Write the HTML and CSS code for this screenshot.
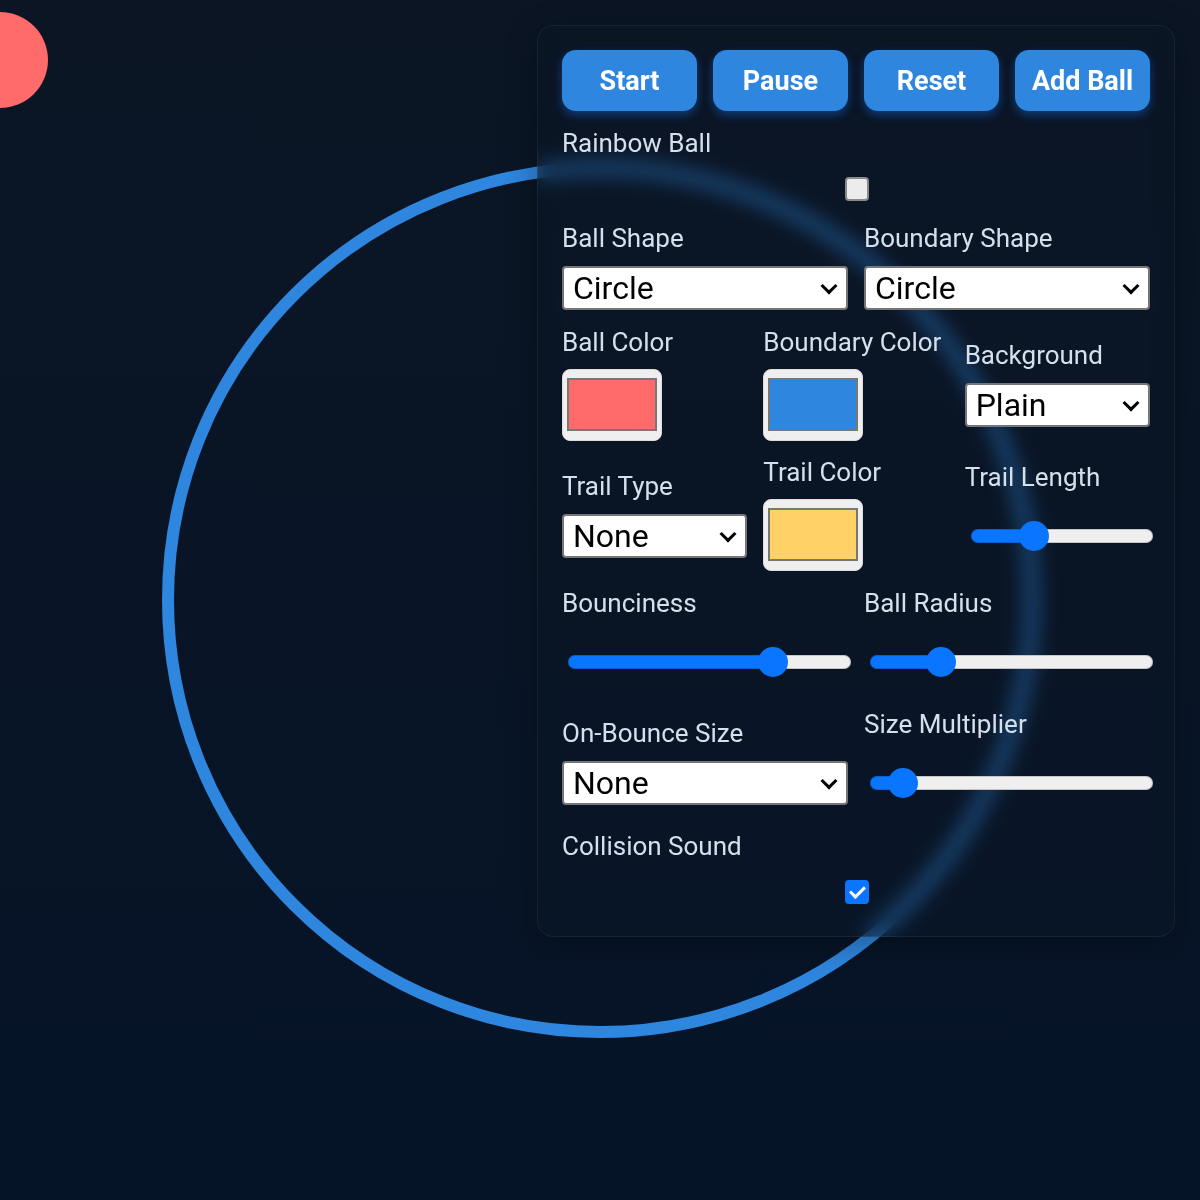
FILE: index.html
```html
<!DOCTYPE html>
<html lang="en">
<head>
<meta charset="utf-8">
<title>Bouncing Ball</title>
<link rel="stylesheet" href="styles.css">
</head>
<body>
<div class="stage">
  <svg class="canvas" width="1200" height="1200" viewBox="0 0 1200 1200" aria-hidden="true">
    <circle cx="600" cy="600" r="432" fill="none" stroke="#2e86de" stroke-width="12"/>
    <circle cx="0" cy="60" r="48" fill="#ff6b6b"/>
  </svg>

  <aside class="panel">
    <div class="buttons">
      <button class="btn">Start</button>
      <button class="btn">Pause</button>
      <button class="btn">Reset</button>
      <button class="btn">Add Ball</button>
    </div>

    <div class="field">
      <label class="lbl">Rainbow Ball</label>
      <input type="checkbox" class="check">
    </div>

    <div class="grid2">
      <div class="field">
        <label class="lbl">Ball Shape</label>
        <div class="select-wrap"><select class="sel"><option>Circle</option></select></div>
      </div>
      <div class="field">
        <label class="lbl">Boundary Shape</label>
        <div class="select-wrap"><select class="sel"><option>Circle</option></select></div>
      </div>
    </div>

    <div class="grid3">
      <div class="field">
        <label class="lbl">Ball Color</label>
        <input type="color" class="color" value="#ff6b6b">
      </div>
      <div class="field">
        <label class="lbl">Boundary Color</label>
        <input type="color" class="color" value="#2e86de">
      </div>
      <div class="field">
        <label class="lbl">Background</label>
        <div class="select-wrap"><select class="sel"><option>Plain</option></select></div>
      </div>
    </div>

    <div class="grid3">
      <div class="field">
        <label class="lbl">Trail Type</label>
        <div class="select-wrap"><select class="sel"><option>None</option></select></div>
      </div>
      <div class="field">
        <label class="lbl">Trail Color</label>
        <input type="color" class="color" value="#ffd166">
      </div>
      <div class="field">
        <label class="lbl">Trail Length</label>
        <input type="range" class="range" min="0" max="100" value="32" style="--f:0.32">
      </div>
    </div>

    <div class="grid2">
      <div class="field">
        <label class="lbl">Bounciness</label>
        <input type="range" class="range" min="0" max="100" value="75" style="--f:0.75">
      </div>
      <div class="field">
        <label class="lbl">Ball Radius</label>
        <input type="range" class="range" min="0" max="100" value="22" style="--f:0.22">
      </div>
    </div>

    <div class="grid2">
      <div class="field">
        <label class="lbl">On-Bounce Size</label>
        <div class="select-wrap"><select class="sel"><option>None</option></select></div>
      </div>
      <div class="field">
        <label class="lbl">Size Multiplier</label>
        <input type="range" class="range" min="0" max="100" value="7" style="--f:0.07">
      </div>
    </div>

    <div class="field">
      <label class="lbl">Collision Sound</label>
      <input type="checkbox" class="check" checked>
    </div>
  </aside>
</div>
</body>
</html>
```

FILE: styles.css
```css
* { box-sizing: border-box; }

html, body {
  margin: 0;
  padding: 0;
  width: 1200px;
  height: 1200px;
  overflow: hidden;
  background: linear-gradient(180deg, #0b1524 0%, #061428 100%);
  font-family: Roboto, "Liberation Sans", Arial, sans-serif;
}

.stage {
  position: relative;
  width: 1200px;
  height: 1200px;
}

.canvas {
  position: absolute;
  left: 0;
  top: 0;
  display: block;
}

.panel {
  position: absolute;
  top: 25px;
  left: 537px;
  width: 638px;
  padding: 24px 24px 26px;
  border: 1px solid rgba(255, 255, 255, 0.06);
  border-radius: 16px;
  background: rgba(12, 22, 38, 0.45);
  backdrop-filter: blur(10px);
  -webkit-backdrop-filter: blur(10px);
  box-shadow: 0 8px 32px rgba(0, 0, 0, 0.3);
  display: flex;
  flex-direction: column;
  gap: 17.5px;
}

.buttons {
  display: grid;
  grid-template-columns: repeat(4, 1fr);
  gap: 16px;
}

.btn {
  font-family: Roboto, "Liberation Sans", Arial, sans-serif;
  font-weight: 700;
  font-size: 27px;
  line-height: 33px;
  padding: 15px 0 13px;
  color: #ffffff;
  background: #2e86de;
  border: none;
  border-radius: 14px;
  box-shadow: 0 4px 10px rgba(20, 110, 230, 0.45);
}

.grid2 {
  display: grid;
  grid-template-columns: 1fr 1fr;
  gap: 16px;
  align-items: center;
}

.grid3 {
  display: grid;
  grid-template-columns: 1fr 1fr 1fr;
  gap: 16px;
  align-items: center;
}

.field {
  display: flex;
  flex-direction: column;
  align-items: flex-start;
  min-width: 0;
}

.lbl {
  display: block;
  font-size: 26px;
  line-height: 28px;
  color: #d6e0ec;
  margin-bottom: 14px;
  white-space: nowrap;
}

.select-wrap {
  position: relative;
  width: 100%;
}

.select-wrap::after {
  content: "";
  position: absolute;
  right: 13px;
  top: 14px;
  width: 9px;
  height: 9px;
  border-right: 3.5px solid #000;
  border-bottom: 3.5px solid #000;
  transform: rotate(45deg);
  pointer-events: none;
}

.sel {
  -webkit-appearance: none;
  appearance: none;
  display: block;
  width: 100%;
  height: 44px;
  margin: 0;
  padding: 0 0 0 9px;
  font-family: Roboto, "Liberation Sans", Arial, sans-serif;
  font-size: 32px;
  color: #000;
  background: #ffffff;
  border: 2px solid #767676;
  border-radius: 4px;
}

.color {
  -webkit-appearance: none;
  appearance: none;
  width: 100px;
  height: 72px;
  margin: -1px 0 0;
  padding: 8px 4px 9px;
  background: #efefef;
  border: 1px solid #dcdcdc;
  border-radius: 8px;
  cursor: pointer;
}

.color::-webkit-color-swatch-wrapper {
  padding: 0;
}

.color::-webkit-color-swatch {
  border: 2px solid #777777;
  border-radius: 0;
}

.check {
  -webkit-appearance: none;
  appearance: none;
  align-self: center;
  position: relative;
  width: 24px;
  height: 24px;
  margin: 6px 6px 6px 8px;
  background: #ececec;
  border: 2px solid #8a8a8a;
  border-radius: 4px;
}

.check:checked {
  background: #0b75ff;
  border-color: #0b75ff;
}

.check:checked::after {
  content: "";
  position: absolute;
  left: 6px;
  top: 1px;
  width: 6px;
  height: 12px;
  border-right: 3.5px solid #fff;
  border-bottom: 3.5px solid #fff;
  transform: rotate(45deg);
}

.range {
  -webkit-appearance: none;
  appearance: none;
  width: calc(100% - 3px);
  height: 14px;
  margin: 24px 0 24px 6px;
  padding: 0;
  background: transparent;
}

.range::-webkit-slider-runnable-track {
  height: 14px;
  border-radius: 7px;
  background: linear-gradient(to right, #0a76ff calc(15px + (100% - 30px) * var(--f)), #efefef 0);
  box-shadow: inset 0 0 0 1px rgba(0, 0, 0, 0.18);
}

.range::-webkit-slider-thumb {
  -webkit-appearance: none;
  appearance: none;
  width: 30px;
  height: 30px;
  margin-top: -8px;
  border-radius: 50%;
  background: #0a76ff;
  border: none;
}
```
